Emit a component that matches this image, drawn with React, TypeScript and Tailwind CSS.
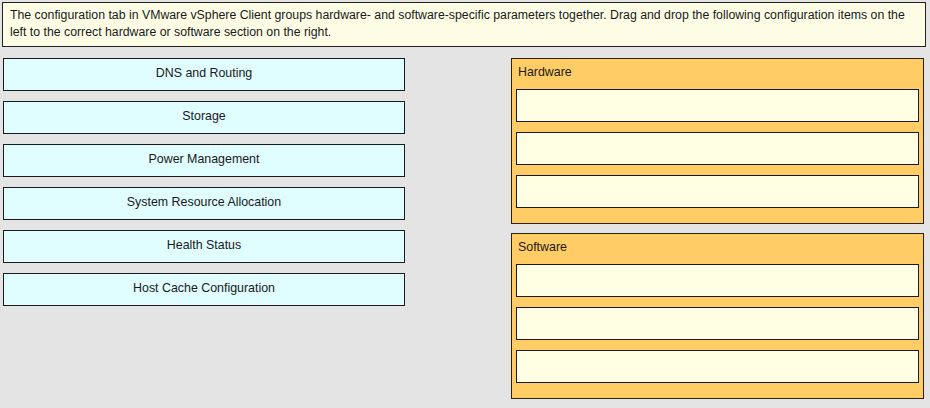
const ITEMS = [
  "DNS and Routing",
  "Storage",
  "Power Management",
  "System Resource Allocation",
  "Health Status",
  "Host Cache Configuration",
];

function Zona({ titulo }: { titulo: string }) {
  return (
    <div className="h-[166px] border border-[#2a2218] bg-[#ffcc66] pl-[4px] pr-[4px]">
      <div className="h-[30px] pl-[2px] pt-[6px] leading-[14px]">{titulo}</div>
      <div className="flex flex-col gap-[10px]">
        {[0, 1, 2].map((i) => (
          <div key={i} className="h-[33px] border border-[#1a1a1a] bg-[#ffffe3]" />
        ))}
      </div>
    </div>
  );
}

export default function App() {
  return (
    <div
      className="h-[408px] w-[930px] overflow-hidden bg-[#e4e4e4] pt-[2px] text-[12.4px] text-[#1a1a1a]"
      style={{ fontFamily: '"Liberation Sans", Arial, sans-serif' }}
    >
      <div className="ml-[2px] h-[45px] w-[924px] border border-[#222] bg-[#fdfde6] px-[7px] pt-[4px] text-[12.3px] leading-[17px]">
        The configuration tab in VMware vSphere Client groups hardware- and software-specific parameters together. Drag and drop the following configuration items on the
        <br />
        left to the correct hardware or software section on the right.
      </div>

      <div className="mt-[11px] flex">
        <div className="ml-[3px] flex w-[402px] flex-col gap-[10px]">
          {ITEMS.map((item) => (
            <div
              key={item}
              className="flex h-[33px] items-center justify-center border border-[#1a1a1a] bg-[#e0fdff] pb-[3px]"
            >
              {item}
            </div>
          ))}
        </div>

        <div className="ml-[106px] flex w-[413px] flex-col gap-[9px]">
          <Zona titulo="Hardware" />
          <Zona titulo="Software" />
        </div>
      </div>
    </div>
  );
}
